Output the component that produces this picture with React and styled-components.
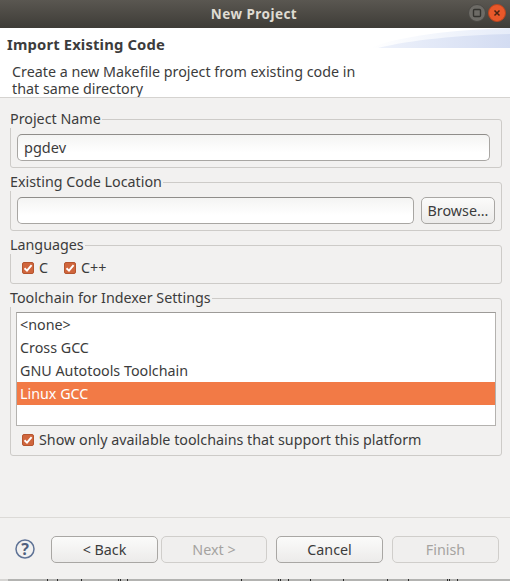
import React from 'react';
import styled, { createGlobalStyle } from 'styled-components';

const Global = createGlobalStyle`
  html, body { margin: 0; padding: 0; background: #f2f1f0; }
  * { box-sizing: border-box; }
  body { font-family: "Noto Sans", "Open Sans", sans-serif; font-size: 14.3px; color: #3c3c3c; }
`;

const Window = styled.div`
  width: 510px; height: 581px; display: flex; flex-direction: column; overflow: hidden; background: #f2f1f0;
`;
const TitleBar = styled.header`
  height: 28px; flex: none; display: flex; align-items: center; justify-content: center; position: relative; padding-right: 2px;
  background: linear-gradient(#5a5751, #3e3c37);
  color: #dfdbd2; font-weight: 700; font-size: 13.5px; letter-spacing: .45px;
`;
const WindowButtons = styled.div`
  position: absolute; right: 3px; top: 3px; display: flex;
`;
const Header = styled.section`
  height: 70px; flex: none; background: #fff; border-bottom: 1px solid #d5d3d0; position: relative; overflow: hidden;
`;
const HeaderTitle = styled.h1`
  margin: 0; padding: 7px 0 0 7px; font-size: 14.8px; line-height: 18px; font-weight: 700; color: #3c3c3c; letter-spacing: .15px;
`;
const HeaderText = styled.p`
  margin: 0; padding: 10px 0 0 12px; width: 362px; line-height: 17px; font-size: 14.3px; color: #3c3c3c;
`;
const Banner = styled.svg`
  position: absolute; right: 0; top: 0;
`;
const Body = styled.main`
  flex: 1; display: flex; flex-direction: column; padding: 21px 8px 0 10px; gap: 14px; min-height: 0;
`;
const Group = styled.fieldset`
  margin: 0; padding: 0; border: 1px solid #cdcbc8; border-radius: 3px; height: ${p => p.$h}px; flex: none; display: block; position: relative; min-width: 0;
`;
const GroupLabel = styled.legend`
  position: absolute; left: -1px; top: -10px; padding: 0 1px 0 0; background: #f2f1f0; line-height: 18px; font-size: 14.3px; color: #3c3c3c;
`;
const GroupRow = styled.div`
  display: flex; align-items: center; gap: ${p => p.$gap || 7}px; padding: ${p => p.$pad};
`;
const TextInput = styled.div`
  flex: 1; height: 27px; border: 1px solid #a8a6a3; border-top-color: #8f8d8a; border-radius: 5px; padding-left: 6px;
  background: linear-gradient(#f4f4f3, #ffffff 70%); line-height: 25px; font-size: 14.5px; color: #3c3c3c;
`;
const Button = styled.button`
  font: inherit; font-size: 14.3px; height: 27px; width: ${p => p.$w}px; padding: 0; border-radius: 5px; flex: none;
  border: 1px solid ${p => p.disabled ? '#d0cecb' : '#a9a7a4'};
  background: ${p => p.disabled ? '#f0efee' : 'linear-gradient(#fbfbfa, #ecebea)'};
  color: ${p => p.disabled ? '#a5a3a0' : '#3c3c3c'};
`;
const CheckRow = styled.div`
  display: flex; align-items: center; padding: ${p => p.$pad};
`;
const CheckLabel = styled.span`
  margin-left: 5px; margin-right: ${p => p.$mr || 0}px; line-height: 18px;
`;
const Box = styled.span`
  width: 12px; height: 12px; flex: none; display: inline-flex; border-radius: 2px; background: #d0663d; border: 1px solid #b5552f;
`;
const List = styled.ul`
  list-style: none; margin: 13px 5px 0 5px; padding: 0; height: 114px; background: #fff; border: 1px solid #b4b2af; border-top-color: #9d9b98;
`;
const ListItem = styled.li`
  height: 23px; padding-left: 3px; line-height: 23px; font-size: 14.3px;
  background: ${p => p.$selected ? '#f27a46' : 'transparent'};
  color: ${p => p.$selected ? '#fff' : '#3c3c3c'};
`;
const Footer = styled.footer`
  height: 62px; flex: none; border-top: 1px solid #dcdad7; display: flex; align-items: flex-start; padding: 18px 11px 0 15px;
`;
const Help = styled.svg`
  flex: none; margin: 3px 16px 0 0;
`;
const ButtonGroup = styled.div`
  display: flex; gap: ${p => p.$gap}px; margin-right: ${p => p.$mr || 0}px;
`;
const Sliver = styled.svg`
  display: block; flex: none;
`;

const Check = () => (
  <Box>
    <svg width="10" height="10" viewBox="0 0 10 10"><path d="M1.5 5.2 4 7.6 8.6 2.2" fill="none" stroke="#fff" strokeWidth="1.9" /></svg>
  </Box>
);

const ticks = [47, 57, 81, 118, 120, 127, 241, 278, 280, 288, 310, 343, 387, 408, 447, 449, 457];

export default function App() {
  return (
    <Window>
      <Global />
      <TitleBar>
        New Project
        <WindowButtons>
          <svg width="20" height="22" viewBox="0 0 20 22">
            <circle cx="10" cy="10" r="8.5" fill="#6d6b66" stroke="#4a4844" />
            <rect x="6.5" y="6.5" width="7" height="7" rx="1" fill="none" stroke="#33322e" strokeWidth="1.4" />
          </svg>
          <svg width="20" height="22" viewBox="0 0 20 22">
            <circle cx="10" cy="10" r="8.5" fill="#e9582a" stroke="#b8441f" />
            <path d="M7.5 7.5l5 5M12.5 7.5l-5 5" stroke="#4a2414" strokeWidth="1.5" />
          </svg>
        </WindowButtons>
      </TitleBar>
      <Header>
        <Banner width="140" height="20" viewBox="0 0 140 20">
          <defs>
            <linearGradient id="bn" x1="0" x2="1" y1="0" y2="0">
              <stop offset="0" stopColor="#ffffff" />
              <stop offset="1" stopColor="#e6ecf9" />
            </linearGradient>
            <linearGradient id="bn2" x1="0" x2="1" y1="0" y2="0">
              <stop offset="0" stopColor="#eef2fb" />
              <stop offset="1" stopColor="#d3dcf2" />
            </linearGradient>
          </defs>
          <path d="M0 20 C30 8 80 2 140 0 V20 Z" fill="url(#bn)" />
          <path d="M8 20 C40 12 90 7 140 6 V20 Z" fill="url(#bn2)" />
        </Banner>
        <HeaderTitle>Import Existing Code</HeaderTitle>
        <HeaderText>Create a new Makefile project from existing code in that same directory</HeaderText>
      </Header>
      <Body>
        <Group $h={49}>
          <GroupLabel>Project Name</GroupLabel>
          <GroupRow $pad="14px 11px 0 6px"><TextInput>pgdev</TextInput></GroupRow>
        </Group>
        <Group $h={49}>
          <GroupLabel>Existing Code Location</GroupLabel>
          <GroupRow $pad="14px 6px 0 6px"><TextInput /><Button $w={74}>Browse...</Button></GroupRow>
        </Group>
        <Group $h={39}>
          <GroupLabel>Languages</GroupLabel>
          <CheckRow $pad="13px 0 0 11px">
            <Check /><CheckLabel $mr={16}>C</CheckLabel>
            <Check /><CheckLabel>C++</CheckLabel>
          </CheckRow>
        </Group>
        <Group $h={158}>
          <GroupLabel>Toolchain for Indexer Settings</GroupLabel>
          <List>
            <ListItem>&lt;none&gt;</ListItem>
            <ListItem>Cross GCC</ListItem>
            <ListItem>GNU Autotools Toolchain</ListItem>
            <ListItem $selected>Linux GCC</ListItem>
          </List>
          <CheckRow $pad="5px 0 0 11px">
            <Check /><CheckLabel>Show only available toolchains that support this platform</CheckLabel>
          </CheckRow>
        </Group>
      </Body>
      <Footer>
        <Help width="20" height="20" viewBox="0 0 20 20">
          <circle cx="10" cy="10" r="9" fill="none" stroke="#5f7396" strokeWidth="1.5" />
          <text x="10" y="15.5" textAnchor="middle" fontSize="16" fontWeight="700" fontFamily="Noto Sans" fill="#4f5f7d">?</text>
        </Help>
        <ButtonGroup $gap={3} $mr={9}>
          <Button $w={107}>&lt; Back</Button>
          <Button $w={106} disabled>Next &gt;</Button>
        </ButtonGroup>
        <ButtonGroup $gap={9}>
          <Button $w={107}>Cancel</Button>
          <Button $w={107} disabled>Finish</Button>
        </ButtonGroup>
      </Footer>
      <Sliver width="510" height="2" viewBox="0 0 510 2">
        <rect width="510" height="2" fill="#b3b3b1" />
        <rect width="8" height="2" fill="#d6d5d3" />
        {ticks.map(x => <rect key={x} x={x} width="1" height="2" fill="#2a2a2a" />)}
      </Sliver>
    </Window>
  );
}
